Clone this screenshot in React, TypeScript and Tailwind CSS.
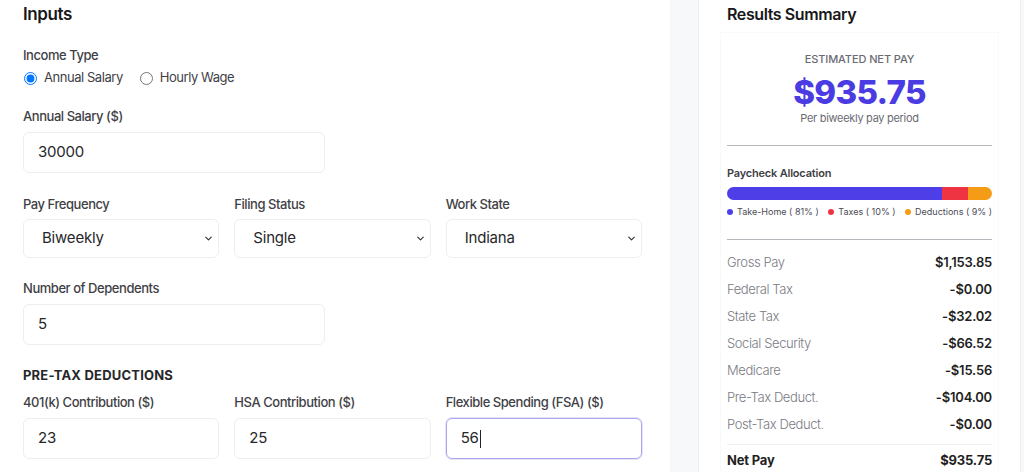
import { ChevronDown } from "lucide-react";

const font = { fontFamily: "Inter, 'Liberation Sans', sans-serif" };

const labelCls = "text-[13px] leading-5 font-medium text-[#3f3f46] tracking-[-0.45px]";

const Field = ({
  label,
  value,
  focused,
}: {
  label: string;
  value: string;
  focused?: boolean;
}) => (
  <div className="flex flex-col">
    <label className={labelCls}>{label}</label>
    <div
      className={`mt-[6px] h-[41px] rounded-md flex items-center px-[14px] text-[15px] text-[#27272a] tracking-[-0.2px] ${
        focused
          ? "border border-[#aaa5ec] shadow-[0_0_0_1px_rgba(139,132,230,0.22)]"
          : "border border-[#eceef1]"
      }`}
    >
      {value}
      {focused && <span className="ml-[1px] h-[18px] w-px bg-[#222]" />}
    </div>
  </div>
);

const SelectField = ({ label, value }: { label: string; value: string }) => (
  <div className="flex flex-col">
    <label className={labelCls}>{label}</label>
    <div className="mt-[5px] h-[39px] rounded-md border border-[#eceef1] flex items-center justify-between pl-[18px] pr-[4px] text-[15px] text-[#27272a] tracking-[-0.2px]">
      <span>{value}</span>
      <ChevronDown size={11} strokeWidth={2.5} className="text-[#333]" />
    </div>
  </div>
);

const rows = [
  ["Gross Pay", "$1,153.85"],
  ["Federal Tax", "-$0.00"],
  ["State Tax", "-$32.02"],
  ["Social Security", "-$66.52"],
  ["Medicare", "-$15.56"],
  ["Pre-Tax Deduct.", "-$104.00"],
  ["Post-Tax Deduct.", "-$0.00"],
];

export default function App() {
  return (
    <div className="flex h-[472px] w-[1024px] bg-[#f6f8fa] overflow-hidden" style={font}>
      {/* Inputs panel */}
      <div className="w-[670px] shrink-0 bg-white pl-[23px] pr-[28px] pt-[2px]">
        <h2 className="text-[17px] leading-6 font-semibold text-[#18181b] tracking-[-0.4px]">Inputs</h2>

        <div className="mt-[19px]">
          <div className={labelCls}>Income Type</div>
          <div className="mt-[3px] flex items-center gap-[17px] h-5 text-[13px] text-[#3f3f46] tracking-[-0.45px]">
            <label className="flex items-center gap-[7px]">
              <input type="radio" name="income" defaultChecked className="m-0 ml-px h-[13px] w-[13px]" />
              Annual Salary
            </label>
            <label className="flex items-center gap-[7px]">
              <input type="radio" name="income" className="m-0 h-[13px] w-[13px]" />
              Hourly Wage
            </label>
          </div>
        </div>

        <div className="mt-[18px] grid grid-cols-2 gap-[15px]">
          <Field label="Annual Salary ($)" value="30000" />
        </div>

        <div className="mt-[21px] grid grid-cols-3 gap-[15px]">
          <SelectField label="Pay Frequency" value="Biweekly" />
          <SelectField label="Filing Status" value="Single" />
          <SelectField label="Work State" value="Indiana" />
        </div>

        <div className="mt-[20px] grid grid-cols-2 gap-[15px]">
          <Field label="Number of Dependents" value="5" />
        </div>

        <h3 className="mt-[20px] text-[13px] leading-5 font-bold text-[#27272a] tracking-[0.2px]">PRE-TAX DEDUCTIONS</h3>

        <div className="mt-[7px] grid grid-cols-3 gap-[15px]">
          <Field label="401(k) Contribution ($)" value="23" />
          <Field label="HSA Contribution ($)" value="25" />
          <Field label="Flexible Spending (FSA) ($)" value="56" focused />
        </div>
      </div>

      {/* Results card */}
      <div className="ml-[28px] w-[323px] shrink-0 bg-white border-x border-[#eceff2] px-[21px] pt-[2px]">
        <h2 className="px-[7px] text-[16px] leading-6 font-semibold text-[#18181b] tracking-[-0.4px]">Results Summary</h2>

        <div className="mt-[6px] border border-b-0 border-[#f8f9fa] px-[6px] pt-[18px]">
          <div className="flex flex-col items-center">
            <div className="text-[11px] leading-4 font-medium text-[#6b6b74] tracking-[-0.1px]">ESTIMATED NET PAY</div>
            <div className="mt-[5px] text-[33px] leading-[40px] font-extrabold text-[#4a3be2] tracking-[-0.7px]">$935.75</div>
            <div className="mt-[-2px] text-[11px] leading-4 text-[#6b6b74] tracking-[-0.3px]">Per biweekly pay period</div>
          </div>

          <div className="mt-[19px] h-px bg-[#b4b6bb]" />

          <div className="mt-[19px] text-[11px] leading-4 font-semibold text-[#3f3f46] tracking-[-0.2px]">Paycheck Allocation</div>
          <div className="mt-[6px] flex h-[13px] rounded-full overflow-hidden">
            <div className="bg-[#4e3ee8]" style={{ width: "81%" }} />
            <div className="bg-[#ee3442]" style={{ width: "10%" }} />
            <div className="bg-[#f59c17]" style={{ width: "9%" }} />
          </div>
          <div className="mt-[4px] flex items-center justify-between whitespace-nowrap text-[9px] leading-4 text-[#4b4b55]">
            <span className="flex items-center gap-[4px]">
              <span className="h-[6px] w-[6px] rounded-full bg-[#4e3ee8]" />Take-Home ( 81% )
            </span>
            <span className="flex items-center gap-[4px]">
              <span className="h-[6px] w-[6px] rounded-full bg-[#ee3442]" />Taxes ( 10% )
            </span>
            <span className="flex items-center gap-[4px]">
              <span className="h-[6px] w-[6px] rounded-full bg-[#f59c17]" />Deductions ( 9% )
            </span>
          </div>

          <div className="mt-[19px] h-px bg-[#b4b6bb]" />

          <div className="mt-[9px] flex flex-col">
            {rows.map(([k, v]) => (
              <div key={k} className="flex justify-between h-[27px] items-center text-[13px]">
                <span className="text-[#7a7a83] font-light tracking-[-0.4px]">{k}</span>
                <span className="font-semibold text-[#1f1f23] tracking-[-0.2px]">{v}</span>
              </div>
            ))}
          </div>
          <div className="mt-[6px] h-px bg-[#f0f1f3]" />
          <div className="flex justify-between h-[32px] items-center text-[13px] font-bold text-[#1f1f23] tracking-[-0.2px]">
            <span>Net Pay</span>
            <span>$935.75</span>
          </div>
        </div>
      </div>
    </div>
  );
}
